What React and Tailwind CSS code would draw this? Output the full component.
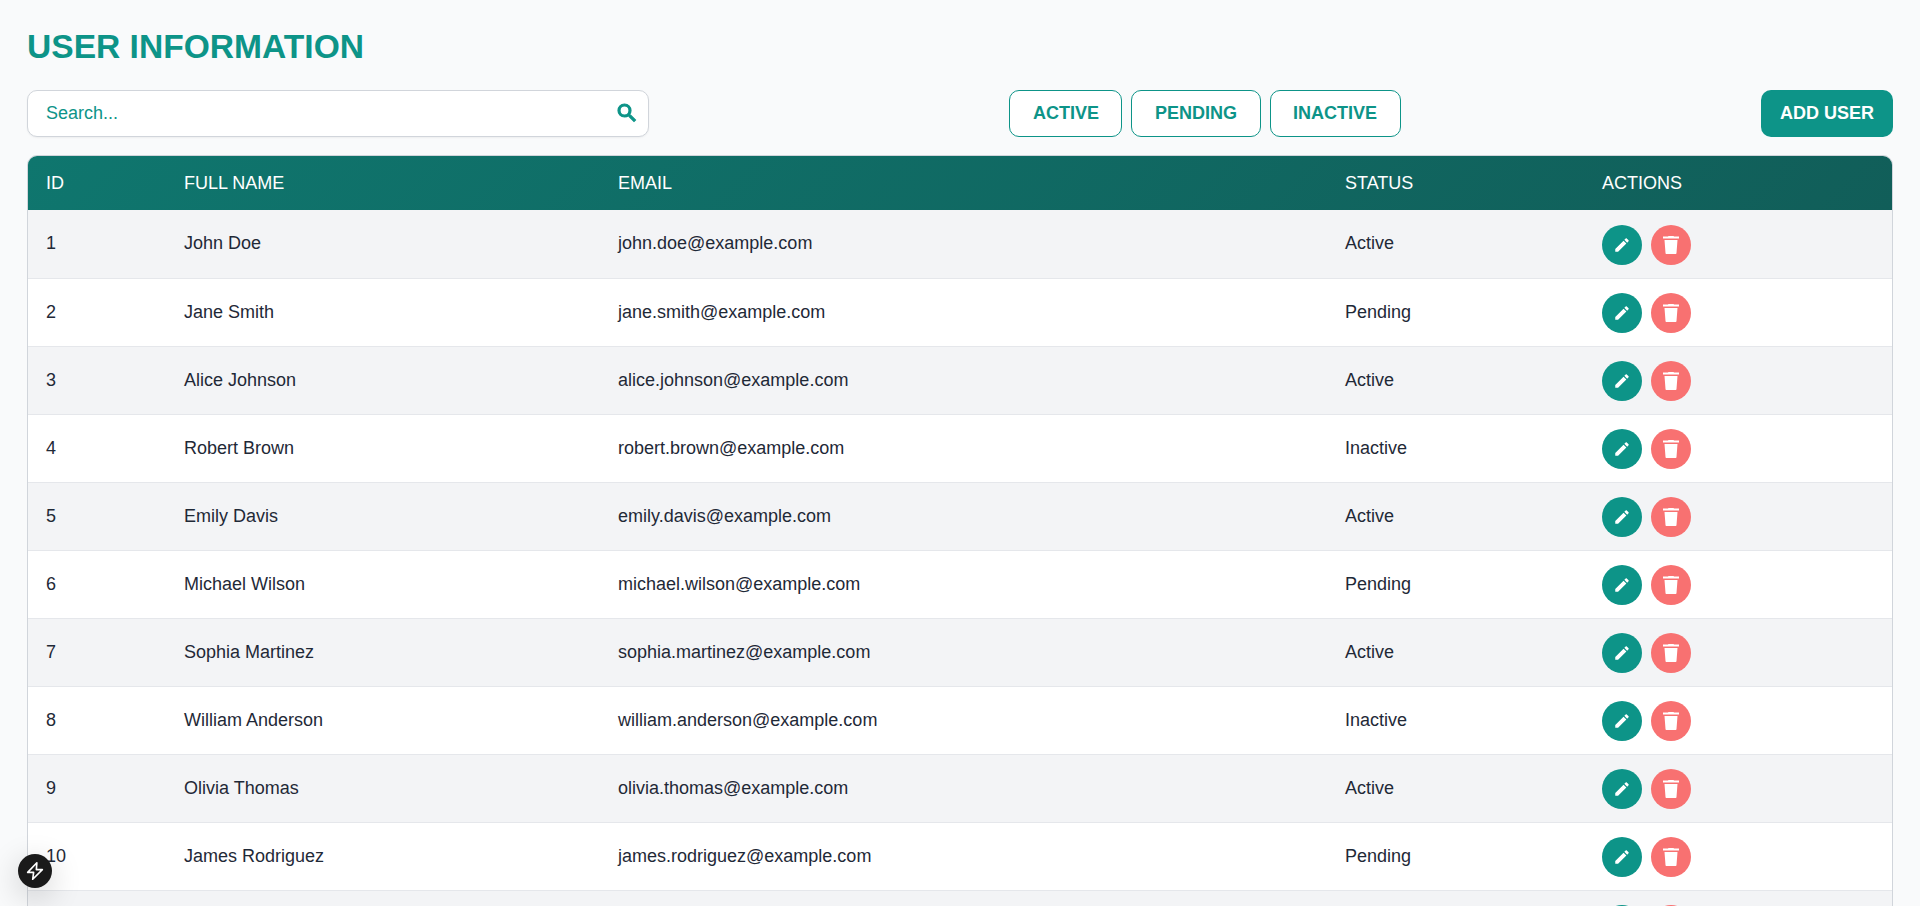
const users = [
  { id: 1, name: 'John Doe', email: 'john.doe@example.com', status: 'Active' },
  { id: 2, name: 'Jane Smith', email: 'jane.smith@example.com', status: 'Pending' },
  { id: 3, name: 'Alice Johnson', email: 'alice.johnson@example.com', status: 'Active' },
  { id: 4, name: 'Robert Brown', email: 'robert.brown@example.com', status: 'Inactive' },
  { id: 5, name: 'Emily Davis', email: 'emily.davis@example.com', status: 'Active' },
  { id: 6, name: 'Michael Wilson', email: 'michael.wilson@example.com', status: 'Pending' },
  { id: 7, name: 'Sophia Martinez', email: 'sophia.martinez@example.com', status: 'Active' },
  { id: 8, name: 'William Anderson', email: 'william.anderson@example.com', status: 'Inactive' },
  { id: 9, name: 'Olivia Thomas', email: 'olivia.thomas@example.com', status: 'Active' },
  { id: 10, name: 'James Rodriguez', email: 'james.rodriguez@example.com', status: 'Pending' },
  // only the top of this row's buttons is on screen
  { id: '', name: '', email: '', status: '' },
];

const filters = ['Active', 'Pending', 'Inactive'];

const EditIcon = () => (
  <svg className="w-[18px] h-[18px]" viewBox="0 0 24 24" fill="currentColor">
    <path d="M3 17.25V21h3.75L17.81 9.94l-3.75-3.75L3 17.25zM20.71 7.04c.39-.39.39-1.02 0-1.41l-2.34-2.34c-.39-.39-1.02-.39-1.41 0l-1.83 1.83 3.75 3.75 1.83-1.83z" />
  </svg>
);

// Wide lid, tapered body
const DeleteIcon = () => (
  <svg className="w-6 h-6" viewBox="0 0 24 24" fill="currentColor">
    <path d="M9 3.5 9.5 3h5l.5.5h5v2H4v-2h5zM5.5 7h13l-1 13c0 .6-.5 1-1 1h-9c-.5 0-1-.4-1-1L5.5 7z" />
  </svg>
);

const SearchIcon = () => (
  <svg className="w-6 h-6" viewBox="0 0 24 24" fill="currentColor">
    <path d="M15.5 14h-.79l-.28-.27C15.41 12.59 16 11.11 16 9.5 16 5.91 13.09 3 9.5 3S3 5.91 3 9.5 5.91 16 9.5 16c1.61 0 3.09-.59 4.23-1.57l.27.28v.79l5 4.99L20.49 19l-4.99-5zm-6 0C7.01 14 5 11.99 5 9.5S7.01 5 9.5 5 14 7.01 14 9.5 11.99 14 9.5 14z" stroke="currentColor" strokeWidth="1.2" />
  </svg>
);

const UserRow = ({ user }) => (
  <tr className="h-[68px] border-b border-[#e5e7eb] odd:bg-[#f3f4f6] even:bg-white text-[#1f2937]">
    <td className="pl-[18px]">{user.id}</td>
    <td className="pl-[18px]">{user.name}</td>
    <td className="pl-[18px]">{user.email}</td>
    <td className="pl-[18px]">{user.status}</td>
    <td className="pl-[18px]">
      <div className="flex gap-[9px] pt-[2px]">
        <button className="w-10 h-10 rounded-full bg-[#0d9488] text-white flex items-center justify-center">
          <EditIcon />
        </button>
        <button className="w-10 h-10 rounded-full bg-[#f87171] text-white flex items-center justify-center">
          <DeleteIcon />
        </button>
      </div>
    </td>
  </tr>
);

export default function App() {
  return (
    <div className="relative h-screen overflow-hidden bg-[#f9fafb] px-[27px] pt-6 font-['Liberation_Sans',Arial,sans-serif] text-[18px]">
      <h1 className="text-[33.6px] leading-[46px] font-bold text-[#0d9488] uppercase">User Information</h1>

      {/* Toolbar */}
      <div className="mt-5 flex items-center justify-between">
        <div className="relative w-[622px]">
          <input
            placeholder="Search..."
            className="w-full h-[47px] rounded-[10px] border border-[#d1d5db] bg-white pl-[18px] pr-12 text-[#0d9488] shadow-xs outline-none placeholder:text-[#0d9488]"
          />
          <span className="absolute right-[10px] top-[11px] text-[#0d9488]">
            <SearchIcon />
          </span>
        </div>
        <div className="flex gap-[9px]">
          {filters.map((f) => (
            <button
              key={f}
              className="h-[47px] px-[22.5px] rounded-[10px] border border-[#0d9488] bg-white text-[#0d9488] font-bold uppercase"
            >
              {f}
            </button>
          ))}
        </div>
        <button className="h-[47px] px-[19px] rounded-[10px] bg-[#0d9488] text-white font-bold uppercase">
          Add User
        </button>
      </div>

      {/* Table */}
      <div className="mt-[18px] rounded-[10px] border border-[#d1d5db] overflow-hidden bg-white">
        <table className="w-full table-fixed border-collapse text-left">
          <colgroup>
            <col className="w-[138px]" />
            <col className="w-[434px]" />
            <col className="w-[727px]" />
            <col className="w-[257px]" />
            <col />
          </colgroup>
          <thead>
            <tr className="h-[54px] bg-[linear-gradient(135deg,#0f766e,#115e59)] text-white uppercase">
              <th className="pl-[18px] font-normal">ID</th>
              <th className="pl-[18px] font-normal">Full Name</th>
              <th className="pl-[18px] font-normal">Email</th>
              <th className="pl-[18px] font-normal">Status</th>
              <th className="pl-[18px] font-normal">Actions</th>
            </tr>
          </thead>
          <tbody>
            {users.map((u, i) => (
              <UserRow key={i} user={u} />
            ))}
          </tbody>
        </table>
      </div>

      {/* Dev indicator */}
      <button className="absolute left-[18px] bottom-[18px] w-[34px] h-[34px] rounded-full bg-[#1a1a1a] text-white flex items-center justify-center shadow-[0_8px_32px_rgba(0,0,0,0.2)]">
        <svg className="w-[22px] h-[22px]" viewBox="0 0 24 24" fill="none" stroke="currentColor" strokeWidth="1.8" strokeLinejoin="round">
          <path d="M14 3 4 13.5h6.5L9.5 21 20 10.5h-6.5L14 3z" />
        </svg>
      </button>
    </div>
  );
}
